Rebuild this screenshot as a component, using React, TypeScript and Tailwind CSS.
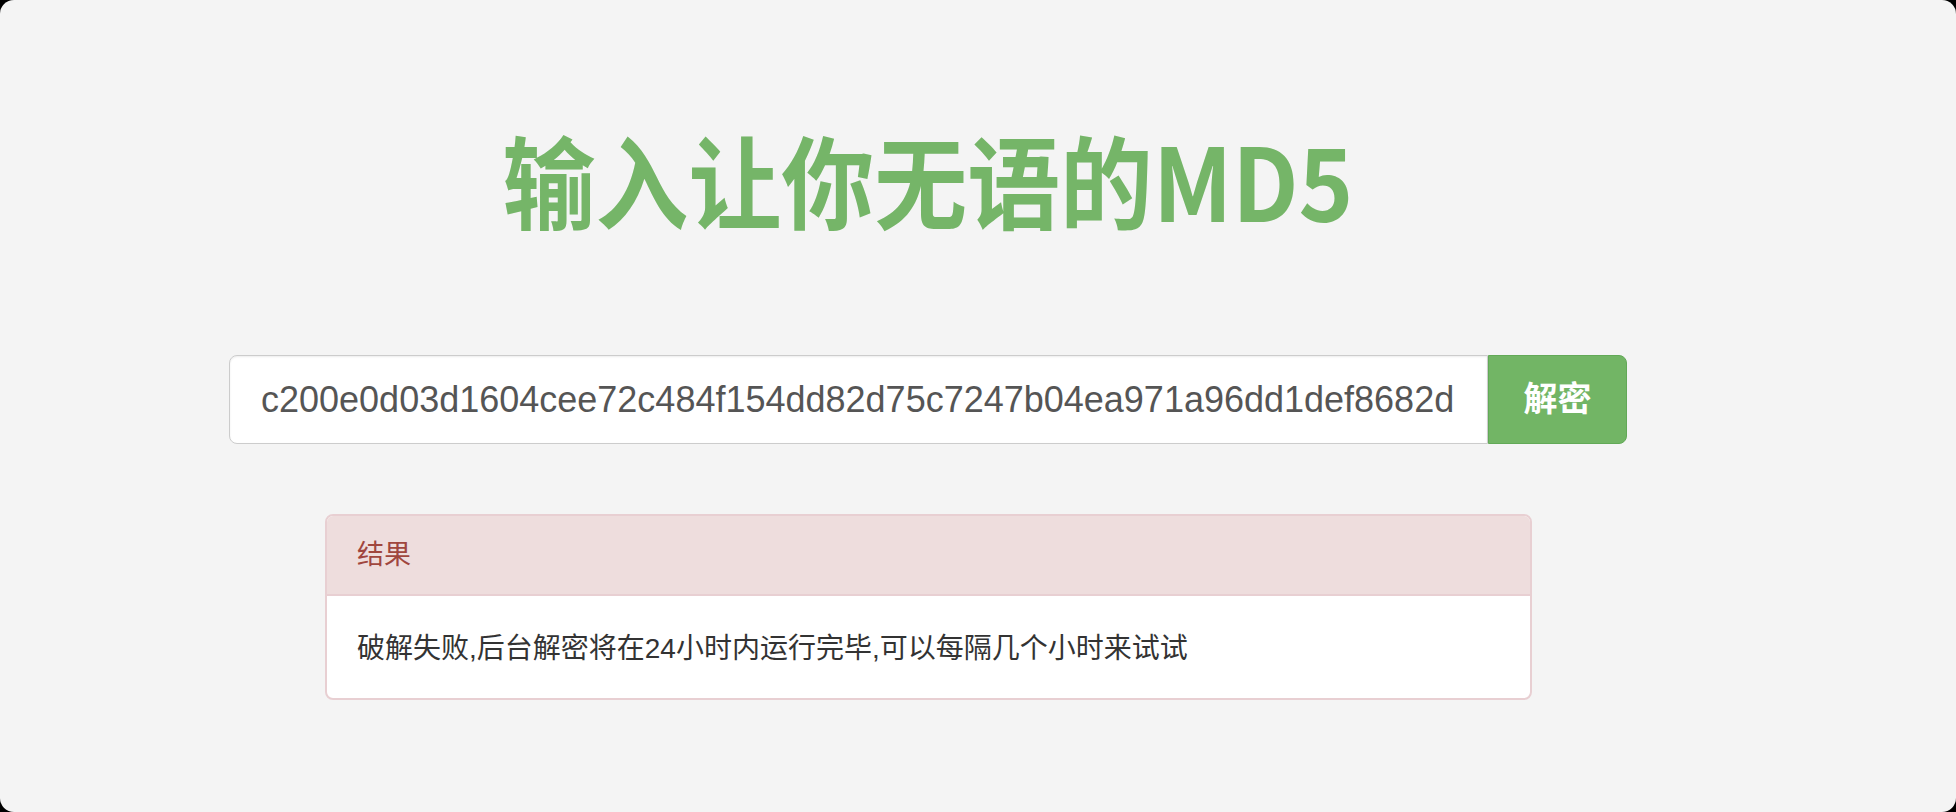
export default function App() {
  return (
    <div className="w-[1956px] h-[812px] bg-black">
      <div
        className="w-full h-full bg-[#f4f4f4] rounded-[14px] overflow-hidden"
        style={{ fontFamily: '"Liberation Sans", "Noto Sans CJK SC", sans-serif' }}
      >
        <div className="ml-[229px] w-[1398px] flex flex-col">
          <h1
            className="mt-[115px] text-center text-[101px] leading-[126px] font-bold text-[#75b568] scale-x-[0.92]"
            style={{ fontFamily: '"Noto Sans CJK SC", "Liberation Sans", sans-serif' }}
          >
            输入让你无语的MD5
          </h1>
          <div className="mt-[114px] flex h-[89px]">
            <div className="flex-1 flex items-center bg-white border border-[#cccccc] rounded-l-[8px] shadow-[inset_0_1px_2px_rgba(0,0,0,0.08)] pl-[31px] text-[36px] text-[#555555]">
              c200e0d03d1604cee72c484f154dd82d75c7247b04ea971a96dd1def8682d
            </div>
            <button className="w-[139px] flex items-center justify-center bg-[#72b565] border border-[#62a957] rounded-r-[8px] text-white text-[34px] font-bold">
              解密
            </button>
          </div>
          <div className="mt-[70px] ml-[96px] w-[1207px] border-2 border-[#e8cfd2] rounded-[8px] overflow-hidden bg-white">
            <div className="h-[80px] flex items-center bg-[#eedddd] border-b-2 border-[#e8cfd2] px-[30px] text-[27px] text-[#a0463e]">
              结果
            </div>
            <div className="h-[102px] flex items-center pt-[3px] px-[30px] text-[28px] text-[#333333]">
              破解失败,后台解密将在24小时内运行完毕,可以每隔几个小时来试试
            </div>
          </div>
        </div>
      </div>
    </div>
  );
}
